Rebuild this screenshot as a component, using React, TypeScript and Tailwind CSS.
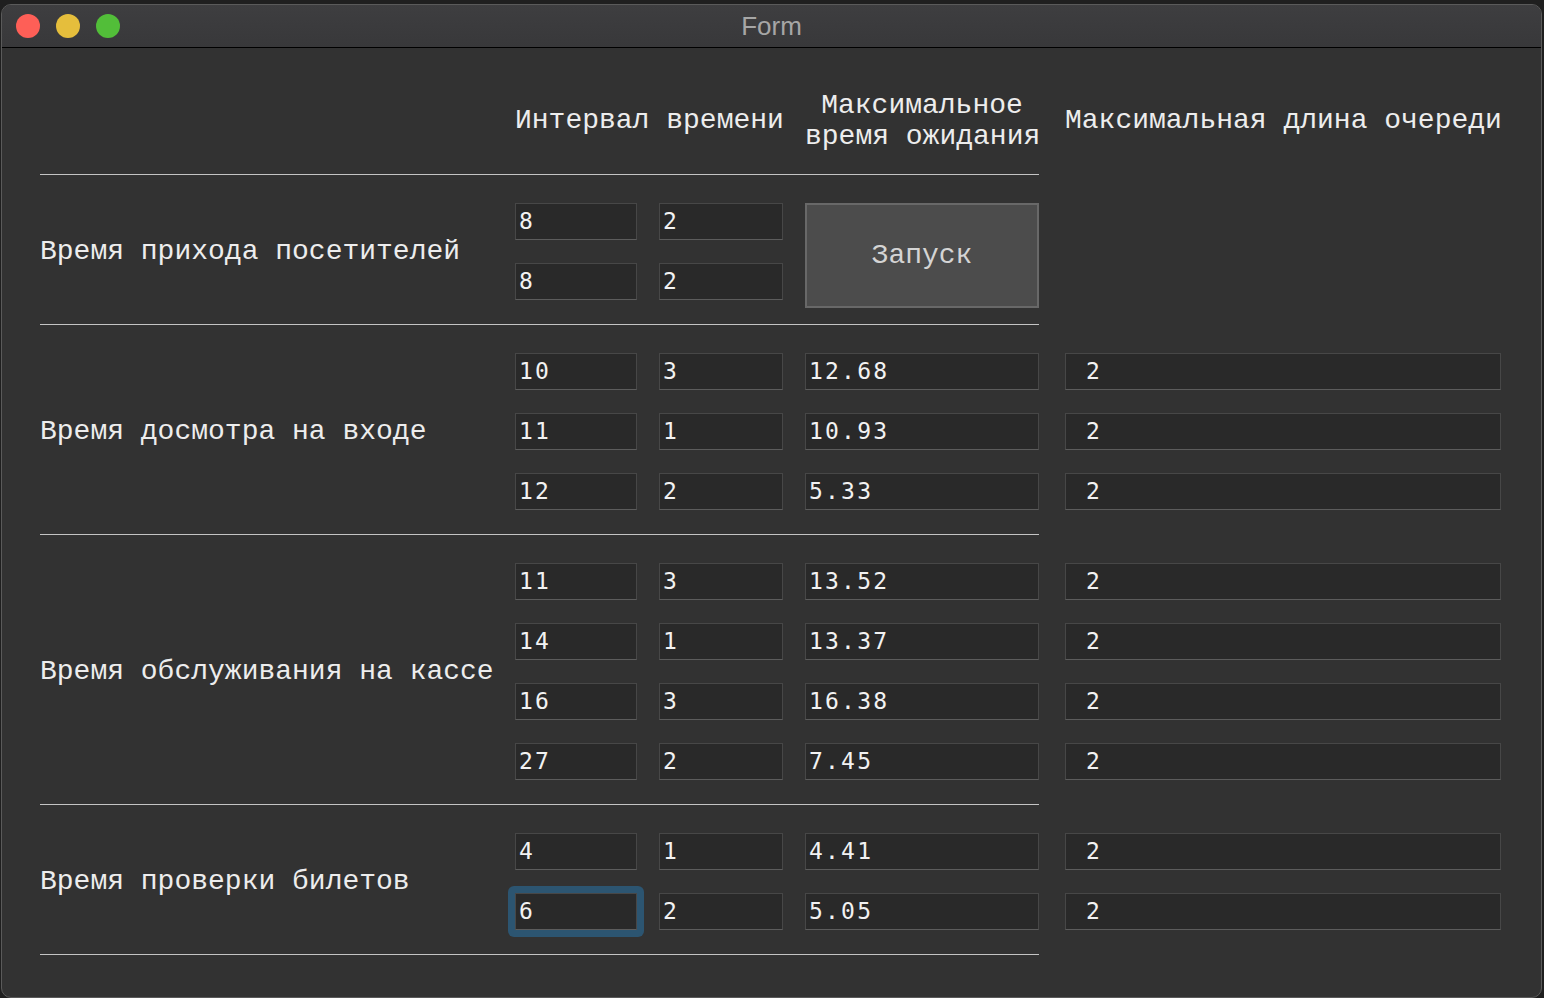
import React from 'react';

const mono = "font-['Liberation_Mono','Courier_New',monospace]";

type Row = { a: string; b: string; c?: string; d?: string; focus?: boolean };

const sections: { label: string; rows: Row[] }[] = [
  {
    label: 'Время досмотра на входе',
    rows: [
      { a: '10', b: '3', c: '12.68', d: '2' },
      { a: '11', b: '1', c: '10.93', d: '2' },
      { a: '12', b: '2', c: '5.33', d: '2' },
    ],
  },
  {
    label: 'Время обслуживания на кассе',
    rows: [
      { a: '11', b: '3', c: '13.52', d: '2' },
      { a: '14', b: '1', c: '13.37', d: '2' },
      { a: '16', b: '3', c: '16.38', d: '2' },
      { a: '27', b: '2', c: '7.45', d: '2' },
    ],
  },
  {
    label: 'Время проверки билетов',
    rows: [
      { a: '4', b: '1', c: '4.41', d: '2' },
      { a: '6', b: '2', c: '5.05', d: '2', focus: true },
    ],
  },
];

const Field = ({ value, w, pad = 'pl-[3px]', focus = false }: { value: string; w: string; pad?: string; focus?: boolean }) => (
  <div className={`relative ${w} h-[37px] shrink-0`}>
    {focus && <div className="absolute -inset-[7px] rounded-[6px] bg-[#2c5571]" />}
    <div
      className={`relative h-full w-full bg-[#292929] border border-[#474747] border-b-[#5c5c5c] flex items-center ${pad} font-['DejaVu_Sans_Mono',monospace] text-[23px] tracking-[2.2px] text-[#f2f2f2]`}
    >
      {value}
    </div>
  </div>
);

const Line = () => <div className="w-[999px] h-px bg-[#c4c4c4]" />;

export default function App() {
  return (
    <div className="w-[1544px] h-[998px] bg-[#1f1f1f] pt-[4px] pl-[1px] overflow-hidden">
      <div className="w-[1541px] h-[994px] rounded-[10px] border border-[#5a5a5a] bg-[#323232] overflow-hidden flex flex-col">
        {/* title bar */}
        <div className="relative h-[43px] shrink-0 bg-gradient-to-b from-[#3e3e40] to-[#38383a] border-b border-black flex items-center px-[14px] gap-[16px]">
          <span className="w-[24px] h-[24px] rounded-full bg-[#fe5f57]" />
          <span className="w-[24px] h-[24px] rounded-full bg-[#e5be3c]" />
          <span className="w-[24px] h-[24px] rounded-full bg-[#52be39]" />
          <div className="absolute inset-0 flex items-center justify-center font-['Liberation_Sans',Arial,sans-serif] text-[26px] text-[#a6a6a6]">
            Form
          </div>
        </div>

        {/* body */}
        <div className={`pl-[38px] ${mono} text-[28px] text-[#ededed]`}>
          {/* header */}
          <div className="flex h-[126px] pt-[19px] items-center">
            <div className="w-[475px] shrink-0" />
            <div className="w-[268px] shrink-0 text-center whitespace-nowrap">Интервал времени</div>
            <div className="ml-[22px] w-[234px] shrink-0 text-center leading-[31px] whitespace-nowrap">
              <div>Максимальное</div>
              <div>время ожидания</div>
            </div>
            <div className="ml-[26px] w-[436px] shrink-0 whitespace-nowrap">Максимальная длина очереди</div>
          </div>
          <Line />

          {/* first section with the button */}
          <div className="flex pt-[28px] pb-[24px]">
            <div className="w-[475px] shrink-0 flex items-center whitespace-nowrap">Время прихода посетителей</div>
            <div className="flex flex-col gap-[23px]">
              <Field value="8" w="w-[122px]" />
              <Field value="8" w="w-[122px]" />
            </div>
            <div className="ml-[22px] flex flex-col gap-[23px]">
              <Field value="2" w="w-[124px]" />
              <Field value="2" w="w-[124px]" />
            </div>
            <div className="ml-[22px] w-[234px] h-[97px]">
              <button className="w-[234px] h-[105px] bg-[#4c4c4c] border-2 border-[#686868] text-[#d4d4d4]">
                Запуск
              </button>
            </div>
          </div>
          <Line />

          {sections.map((s) => (
            <React.Fragment key={s.label}>
              <div className="flex pt-[28px] pb-[24px]">
                <div className="w-[475px] shrink-0 flex items-center whitespace-nowrap">{s.label}</div>
                <div className="flex flex-col gap-[23px]">
                  {s.rows.map((r, i) => (
                    <Field key={i} value={r.a} w="w-[122px]" focus={r.focus} />
                  ))}
                </div>
                <div className="ml-[22px] flex flex-col gap-[23px]">
                  {s.rows.map((r, i) => (
                    <Field key={i} value={r.b} w="w-[124px]" />
                  ))}
                </div>
                <div className="ml-[22px] flex flex-col gap-[23px]">
                  {s.rows.map((r, i) => (
                    <Field key={i} value={r.c ?? ''} w="w-[234px]" />
                  ))}
                </div>
                <div className="ml-[26px] flex flex-col gap-[23px]">
                  {s.rows.map((r, i) => (
                    <Field key={i} value={r.d ?? ''} w="w-[436px]" pad="pl-[20px]" />
                  ))}
                </div>
              </div>
              <Line />
            </React.Fragment>
          ))}
        </div>
      </div>
    </div>
  );
}
